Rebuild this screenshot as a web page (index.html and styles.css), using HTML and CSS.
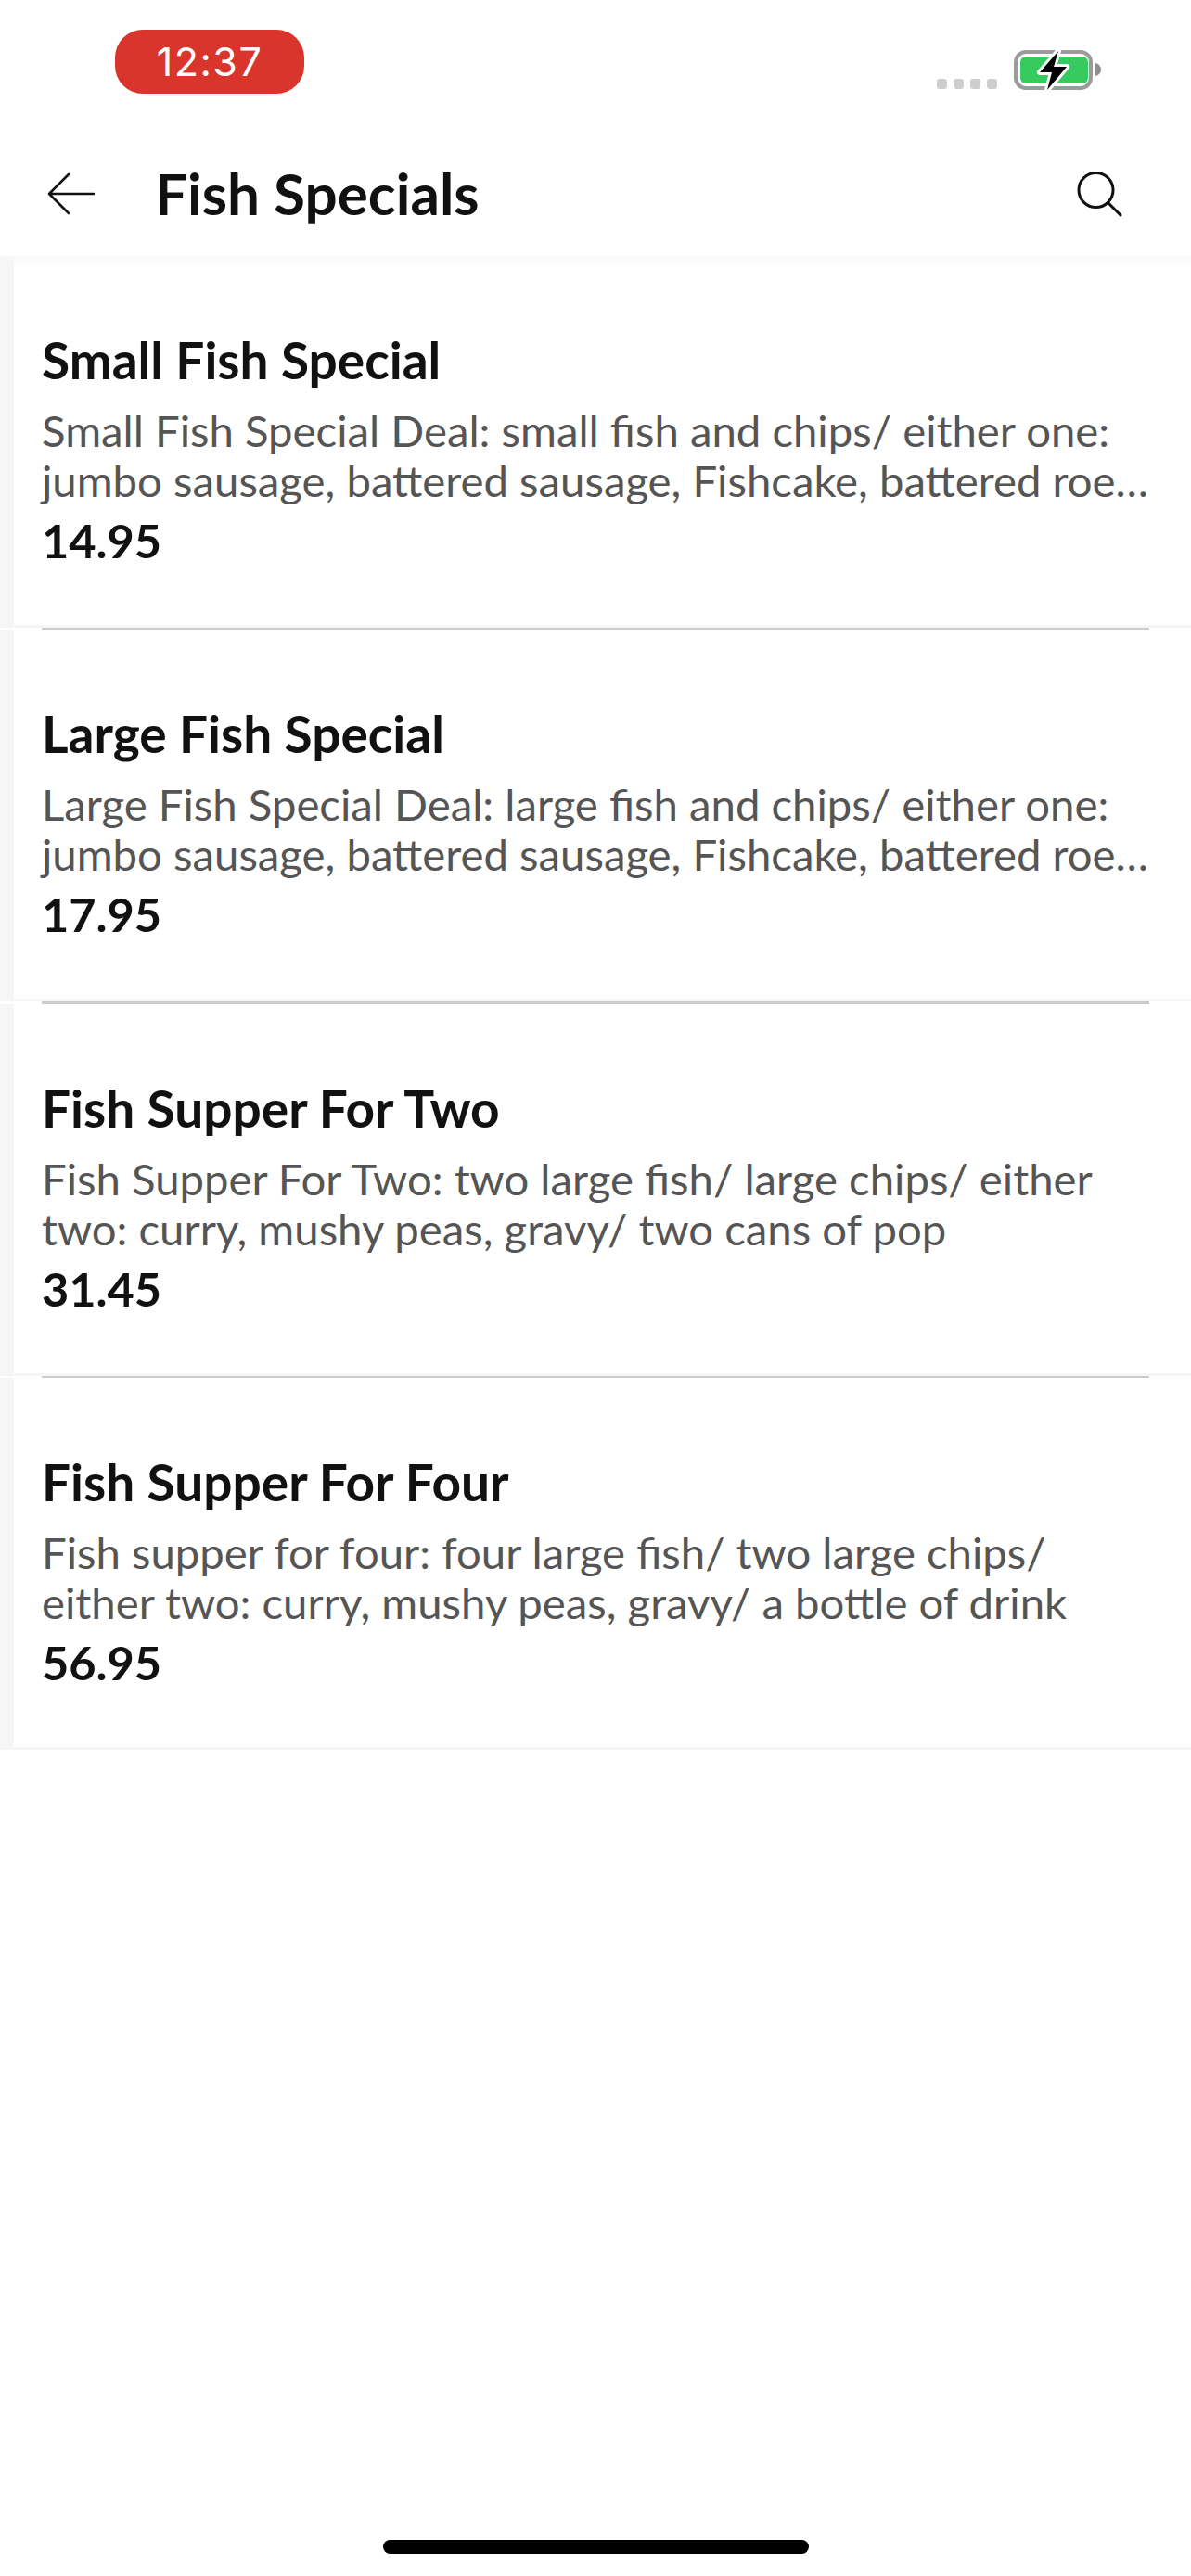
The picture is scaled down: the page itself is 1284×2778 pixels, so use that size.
FILE: index.html
```html
<!DOCTYPE html>
<html>
<head>
  <title>Fish Specials</title>
  <link rel="stylesheet" href="styles.css">
</head>
<body>

  <!-- Status bar -->
  <div class="status-bar">
    <div class="clock">12:37</div>
    <div class="status-icons">
      <div class="signal">
        <span></span><span></span><span></span><span></span>
      </div>
      <svg class="battery" width="96" height="50" viewBox="0 0 96 50">
        <rect x="4" y="6" width="81" height="39" rx="11" fill="none" stroke="#9b9b9b" stroke-width="4"/>
        <rect x="9" y="11" width="73" height="29" rx="6" fill="#37ca5e"/>
        <path d="M90 18c4 1 6 4 6 7s-2 6-6 7z" fill="#8f8f8f"/>
        <path d="M50 5 30 28h13l-5 19 21-25H45z" fill="#000" stroke="#fff" stroke-width="6" stroke-linejoin="round" paint-order="stroke"/>
      </svg>
    </div>
  </div>

  <!-- Page header -->
  <div class="header">
    <svg class="back" width="51" height="46" viewBox="0 0 51 46">
      <path d="M23 2 2 23l21 21M2 23h48" fill="none" stroke="#111" stroke-width="2.6" stroke-linecap="round" stroke-linejoin="round"/>
    </svg>
    <h1>Fish Specials</h1>
    <svg class="search" width="50" height="50" viewBox="0 0 50 50">
      <circle cx="21.5" cy="21" r="18.5" fill="none" stroke="#111" stroke-width="3"/>
      <path d="M35 35l13 13" fill="none" stroke="#111" stroke-width="3" stroke-linecap="round"/>
    </svg>
  </div>

  <!-- Menu items -->
  <div class="list">
    <div class="item">
      <h2>Small Fish Special</h2>
      <p class="desc">Small Fish Special Deal: small fish and chips/ either one: jumbo sausage, battered sausage, Fishcake, battered roe…</p>
      <div class="price">14.95</div>
    </div>
    <div class="divider"></div>
    <div class="item">
      <h2>Large Fish Special</h2>
      <p class="desc">Large Fish Special Deal: large fish and chips/ either one: jumbo sausage, battered sausage, Fishcake, battered roe…</p>
      <div class="price">17.95</div>
    </div>
    <div class="divider"></div>
    <div class="item">
      <h2>Fish Supper For Two</h2>
      <p class="desc">Fish Supper For Two: two large fish/ large chips/ either two: curry, mushy peas, gravy/ two cans of pop</p>
      <div class="price">31.45</div>
    </div>
    <div class="divider"></div>
    <div class="item">
      <h2>Fish Supper For Four</h2>
      <p class="desc">Fish supper for four: four large fish/ two large chips/ either two: curry, mushy peas, gravy/ a bottle of drink</p>
      <div class="price">56.95</div>
    </div>
  </div>

  <div class="home-bar"></div>

</body>
</html>
```

FILE: styles.css
```css
* {
  box-sizing: border-box;
}
body {
  margin: 0;
  min-height: 100vh;
  display: flex;
  flex-direction: column;
  background: #fff;
  font-family: Lato, "Open Sans", sans-serif;
  color: #111;
}

.status-bar {
  height: 150px;
  display: flex;
  justify-content: space-between;
  align-items: flex-start;
  padding: 32px 97px 0 124px;
}
.clock {
  width: 204px;
  height: 69px;
  border-radius: 30px;
  background: #d9352c;
  color: #fff;
  font-family: Inter, sans-serif;
  font-size: 43px;
  letter-spacing: 1.5px;
  line-height: 69px;
  text-align: center;
}
.status-icons {
  display: flex;
  align-items: flex-end;
  gap: 16px;
  margin-top: 18px;
}
.signal {
  display: flex;
  gap: 7px;
  margin-bottom: 4px;
}
.signal span {
  width: 11px;
  height: 11px;
  border-radius: 3px;
  background: #cecece;
}

.header {
  height: 126px;
  display: flex;
  align-items: center;
  padding: 0 74px 8px 51px;
}
.header h1 {
  flex: 1;
  margin: 0 0 2px 65px;
  font-size: 62px;
  font-weight: 700;
  line-height: 1;
}

.list {
  flex: 1;
  background: linear-gradient(#fafafa, #fff 14px) no-repeat;
}
.item {
  height: 401px;
  padding: 79px 39px 0 30px;
  border-left: 15px solid #f6f6f6;
  border-bottom: 3px solid #f6f6f6;
}
.item h2 {
  margin: 0;
  font-size: 55px;
  font-weight: 700;
  line-height: 66px;
}
.desc {
  margin: 16px 0 0;
  font-size: 47.3px;
  line-height: 54px;
  color: #555;
}
.price {
  margin-top: 7px;
  font-size: 50.5px;
  font-weight: 700;
  line-height: 62px;
}
.divider {
  height: 2.33px;
  margin: 0 45px;
  background: #cbcbcb;
}

.home-bar {
  width: 459px;
  height: 15px;
  margin: 0 auto 24px;
  border-radius: 8px;
  background: #000;
}
```
